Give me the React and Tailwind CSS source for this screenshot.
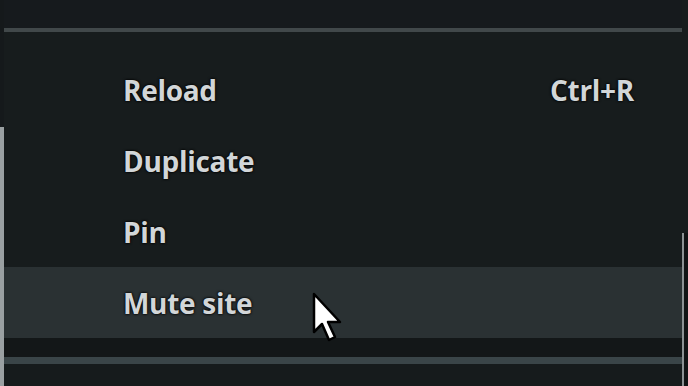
export default function App() {
  const font = { fontFamily: '"Open Sans", "Noto Sans", sans-serif' };
  const item =
    "h-[71px] flex items-center pl-[119px] pr-[48px] justify-between text-[28px] font-bold text-[#d2d6d8] [text-shadow:0_0_3px_#000,0_0_2px_#000] tracking-[-0.3px]";
  return (
    <div className="w-[688px] h-[386px] bg-[#171c1d] overflow-hidden flex flex-row relative" style={font}>
      {/* left edge sliver */}
      <div className="w-[4px] flex flex-col">
        <div className="h-[127px] bg-[#15191b]" />
        <div className="flex-1 bg-[#9aa0a2]" />
      </div>
      <div className="flex-1 flex flex-col">
        <div className="h-[28px] bg-[#161a1d]" />
        <div className="h-[4px] bg-[#41484a]" />
        <div className="h-[22px]" />
        <div className={item}>
          <span>Reload</span>
          <span>Ctrl+R</span>
        </div>
        <div className={item}>
          <span>Duplicate</span>
        </div>
        <div className={item}>
          <span>Pin</span>
        </div>
        <div className={item + " bg-[#2a3133]"}>
          <span>Mute site</span>
        </div>
        <div className="h-[19px] bg-[#131718]" />
        <div className="h-[7px] bg-[#3a4548]" />
        <div className="flex-1 bg-[#161b1c]" />
      </div>
      {/* right edge sliver */}
      <div className="w-[6px] flex flex-col">
        <div className="h-[233px] bg-[#171c1d]" />
        <div className="flex-1 flex flex-row">
          <div className="w-[2px] bg-[#8c9294]" />
          <div className="flex-1 bg-[#111415]" />
        </div>
      </div>
      {/* cursor */}
      <svg
        className="absolute left-[312px] top-[292px]"
        width="34"
        height="52"
        viewBox="0 0 34 52"
      >
        <path
          d="M2 2 L2 40 L10 32 L17 48 L23 45 L16 30 L28 30 Z"
          fill="#fff"
          stroke="#000"
          strokeWidth="2.5"
          strokeLinejoin="round"
        />
      </svg>
    </div>
  );
}
